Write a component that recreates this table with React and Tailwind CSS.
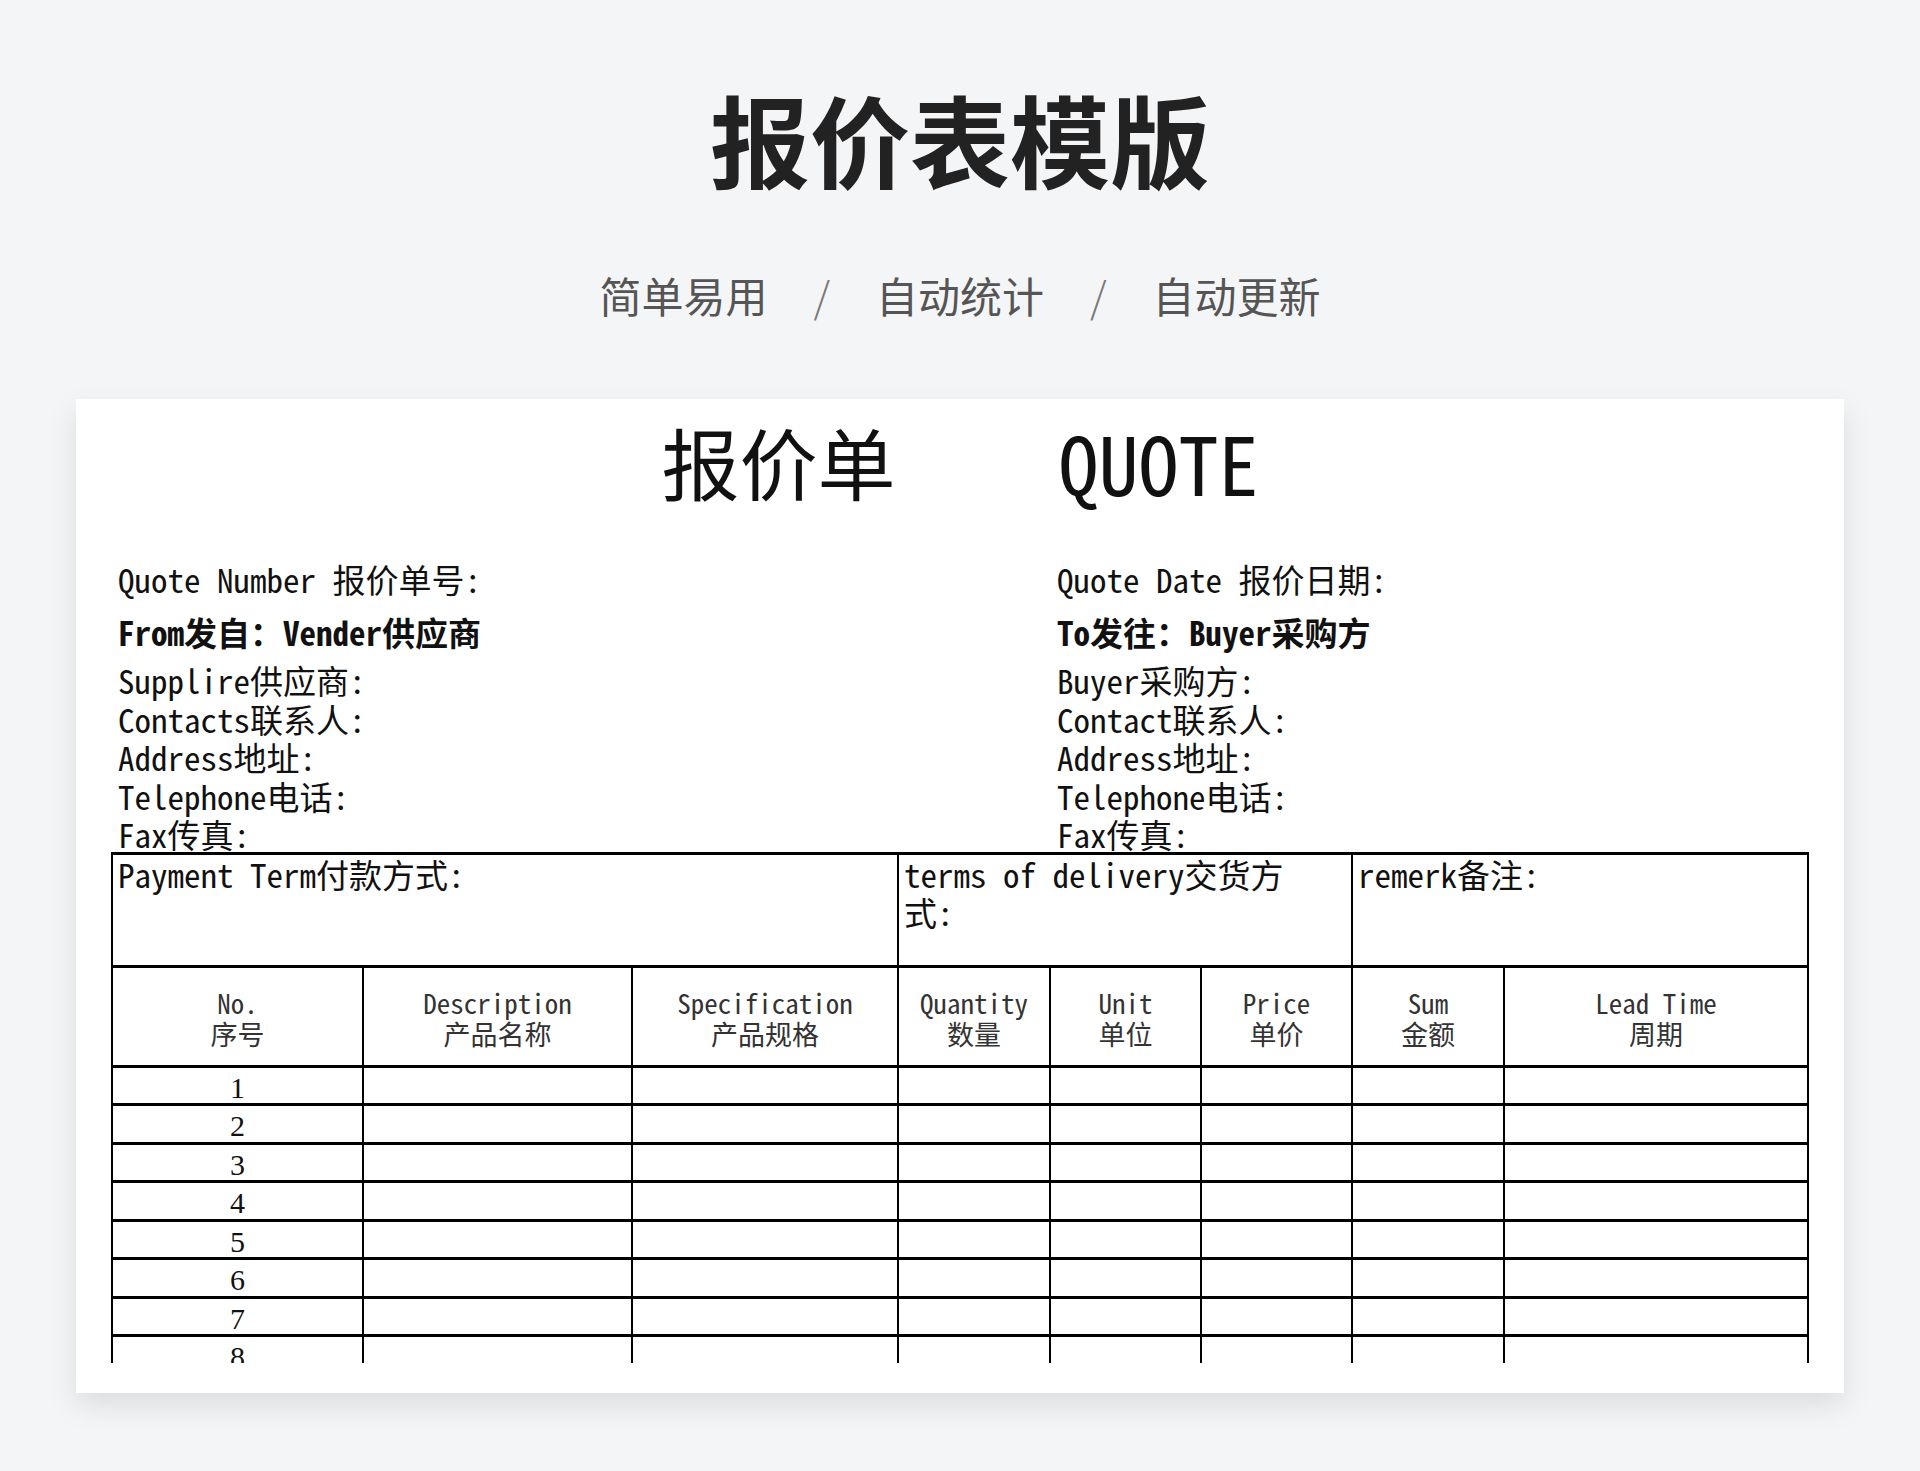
import React from "react";

// Spreadsheet-style quote template preview

const SHEET = "font-['Noto_Sans_Mono_CJK_SC','Noto_Sans_CJK_SC',sans-serif]";

const info = [
    ["Supplire供应商:", "Buyer采购方:"],
    ["Contacts联系人:", "Contact联系人:"],
    ["Address地址:", "Address地址:"],
    ["Telephone电话:", "Telephone电话:"],
    ["Fax传真:", "Fax传真:"],
];

const columns = [
    ["No.", "序号"],
    ["Description", "产品名称"],
    ["Specification", "产品规格"],
    ["Quantity", "数量"],
    ["Unit", "单位"],
    ["Price", "单价"],
    ["Sum", "金额"],
    ["Lead Time", "周期"],
];

const rows = [1, 2, 3, 4, 5, 6, 7];

function Cell({ children, className = "", open = false }) {
    const border = open ? "border-r-2 border-black" : "border-r-2 border-b-[3px] border-black";
    return <div className={`${border} ${className}`}>{children}</div>;
}

function DataRow({ n, last }) {
    const h = last ? "h-[26px] overflow-hidden" : "h-[38.5px]";
    return (
        <>
            <Cell open={last} className={`${h} pt-[2px] flex justify-center font-['Liberation_Serif',serif] text-[30px] leading-[36px] text-[#111]`}>
                {n}
            </Cell>
            {columns.slice(1).map((_, i) => (
                <Cell key={i} open={last} className={h} />
            ))}
        </>
    );
}

export default function App() {
    return (
        <div className="min-h-[1471px] bg-[#f4f5f7] pt-[88px] font-['Noto_Sans_CJK_SC',sans-serif]">
            {/* Heading */}
            <h1 className="text-center text-[100px] leading-none font-bold text-[#222]">报价表模版</h1>
            <div className="mt-[86px] flex justify-center items-center gap-[46px] text-[42px] leading-[42px] text-[#555]">
                <span>简单易用</span>
                <span className="text-[#777] font-light">/</span>
                <span>自动统计</span>
                <span className="text-[#777] font-light">/</span>
                <span>自动更新</span>
            </div>

            {/* Sheet card */}
            <div className={`mt-[83px] mx-auto w-[1768px] h-[994px] overflow-hidden bg-white shadow-[0_12px_28px_rgba(0,0,0,0.10)] pt-[12px] ${SHEET} text-[#111]`}>
                <div className="h-[100px] flex justify-center items-center gap-[163px]">
                    <span className="text-[78px] leading-none">报价单</span>
                    <span className="text-[80px] leading-none">QUOTE</span>
                </div>

                <div className="mt-[44px] ml-[35px] w-[1698px] text-[33px]">
                    <div className="flex h-[50px] items-center">
                        <div className="w-[940px] pl-[7px]">Quote Number 报价单号:</div>
                        <div className="pl-[6px]">Quote Date 报价日期:</div>
                    </div>
                    <div className="flex h-[56px] items-center font-bold">
                        <div className="w-[940px] pl-[7px]">From发自：Vender供应商</div>
                        <div className="pl-[6px]">To发往：Buyer采购方</div>
                    </div>
                    {info.map(([l, r]) => (
                        <div key={l} className="flex h-[38.5px] items-center leading-[38px]">
                            <div className="w-[940px] pl-[7px]">{l}</div>
                            <div className="pl-[6px]">{r}</div>
                        </div>
                    ))}
                </div>

                {/* Table */}
                <div className="-mt-[2px] ml-[35px] w-[1698px] border-l-2 border-t-[3px] border-black grid grid-cols-[251px_269px_266px_152px_151px_151px_152px_304px]">
                    <Cell className="col-span-3 h-[113px] px-[5px] text-[33px] leading-[38px]">Payment Term付款方式:</Cell>
                    <Cell className="col-span-3 h-[113px] px-[5px] text-[33px] leading-[38px]">
                        terms of delivery交货方
                        <br />
                        式:
                    </Cell>
                    <Cell className="col-span-2 h-[113px] px-[5px] text-[33px] leading-[38px]">remerk备注:</Cell>

                    {columns.map(([en, zh]) => (
                        <Cell key={en} className="h-[100px] pt-[4px] flex flex-col items-center justify-center text-[27px] leading-[31px] text-[#333]">
                            <span>{en}</span>
                            <span>{zh}</span>
                        </Cell>
                    ))}

                    {rows.map((n) => (
                        <DataRow key={n} n={n} />
                    ))}
                    <DataRow n={8} last />
                </div>
            </div>
        </div>
    );
}
